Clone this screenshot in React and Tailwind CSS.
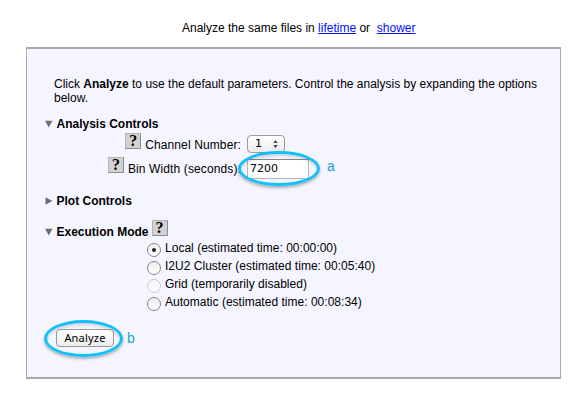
import React from "react";

function Help({ className = "" }) {
  return (
    <span
      className={`flex h-4 w-4 shrink-0 items-center justify-center border border-[#8c8c8c] border-t-[#b4b4b4] border-l-[#b4b4b4] bg-[#d2d2d2] font-['Liberation_Serif',serif] text-[16px] leading-none font-bold ${className}`}
    >
      ?
    </span>
  );
}

function Triangle({ open }) {
  return (
    <svg className="mr-[4px] h-2 w-[7.5px] shrink-0 fill-[#707070]" viewBox="0 0 8 8">
      <path d={open ? "M0 0.5H8L4 7.8Z" : "M0.5 0L7.8 4L0.5 8Z"} />
    </svg>
  );
}

function Ring({ className }) {
  return (
    <span
      className={`pointer-events-none absolute rounded-[50%] border-3 border-[#10c0f8] shadow-[0_2px_3px_rgba(0,0,0,0.3),inset_0_2px_3px_rgba(0,0,0,0.15)] ${className}`}
    />
  );
}

function Option({ label, selected, disabled }) {
  return (
    <div className="flex h-[18px] items-start">
      <span
        className={`mt-[2px] mr-[4px] flex h-[14px] w-[14px] items-center justify-center rounded-full border bg-gradient-to-b ${
          disabled
            ? "border-[#c9c9ce] from-[#f5f5fa] to-[#fafaff]"
            : "border-[#858585] from-[#eeeeee] to-white"
        }`}
      >
        {selected && <span className="h-1 w-1 rounded-full bg-[#222]" />}
      </span>
      <span className="tracking-[0.02px]">{label}</span>
    </div>
  );
}

export default function App() {
  return (
    <div className="h-[402px] w-[583px] overflow-hidden bg-white font-['Liberation_Sans',Arial,sans-serif] text-[12px] leading-[14px] whitespace-pre text-black">
      <header className="h-[47px] pt-[21px] pl-[182px]">
        Analyze the same files in <a className="text-[#0010ff] underline">lifetime</a> or{"  "}
        <a className="text-[#0010ff] underline">shower</a>
      </header>
      <main className="ml-[26px] h-[332px] w-[535px] border border-y-2 border-[#a9a9a9] bg-[#f5f5ff] pt-7 shadow-[inset_1px_0_0_white]">
        <p className="pl-[27px]">
          Click <b>Analyze</b> to use the default parameters. Control the analysis by expanding the options{"\n"}below.
        </p>

        <div className="mt-3 flex h-[14px] items-center pl-[18px]">
          <Triangle open />
          <b>Analysis Controls</b>
        </div>
        <div className="mt-[2px] flex h-6 items-start">
          <div className="flex w-[214px] justify-end">
            <Help className="mr-1" />
            <span className="pt-[5px] tracking-[0.12px]">Channel Number:</span>
          </div>
          <span className="mt-[2px] ml-[6px] flex h-[18px] w-[38px] items-center rounded-[4px] border border-[#9b9b9b] bg-gradient-to-b from-white to-[#ececec] pl-[7px] font-['DejaVu_Sans',sans-serif] text-[11px]">
            1
            <svg className="ml-[11px] h-2 w-[5px] fill-[#444]" viewBox="0 0 5 9">
              <path d="M2.5 0L5 3.5H0ZM0 5.5H5L2.5 9Z" />
            </svg>
          </span>
        </div>
        <div className="flex h-[37px] items-start">
          <div className="flex w-[214px] justify-end">
            <Help className="mr-1" />
            <span className="pt-[5px] tracking-[0.12px]">Bin Width (seconds):</span>
          </div>
          <span className="relative mt-[2px] ml-[6px] flex h-5 w-[62px] items-center border border-[#b5b5b5] border-t-[#858585] bg-white pl-[2px] font-['DejaVu_Sans',sans-serif] text-[11px]">
            7200
            <Ring className="-top-[9px] -left-[10px] h-[35px] w-[82px]" />
          </span>
          <span className="mt-[2px] ml-[18px] text-[14px] text-[#1a9fd8]">a</span>
        </div>

        <div className="flex h-[14px] items-center pl-[18px]">
          <Triangle />
          <b>Plot Controls</b>
        </div>

        <div className="mt-3 flex h-[21px] items-start pl-[18px]">
          <span className="mt-[5px] flex h-[14px] items-center">
            <Triangle open />
            <b>Execution Mode</b>
          </span>
          <Help className="ml-[3px]" />
        </div>
        <div className="pl-[120px]">
          <Option selected label="Local (estimated time: 00:00:00)" />
          <Option label="I2U2 Cluster (estimated time: 00:05:40)" />
          <Option disabled label="Grid (temporarily disabled)" />
          <Option label="Automatic (estimated time: 00:08:34)" />
        </div>

        <div className="mt-4 flex h-[18px] items-center pl-[29px]">
          <button className="relative h-[18px] w-[58px] rounded-[4px] border border-[#999] bg-gradient-to-b from-white to-[#ececec] font-['Noto_Sans',sans-serif] text-[11px] leading-4 tracking-[0.2px]">
            Analyze
            <Ring className="-top-[10px] -left-[13px] h-[37px] w-[79px]" />
          </button>
          <span className="ml-[13px] text-[14px] leading-[14px] text-[#1a9fd8]">b</span>
        </div>
      </main>
    </div>
  );
}
